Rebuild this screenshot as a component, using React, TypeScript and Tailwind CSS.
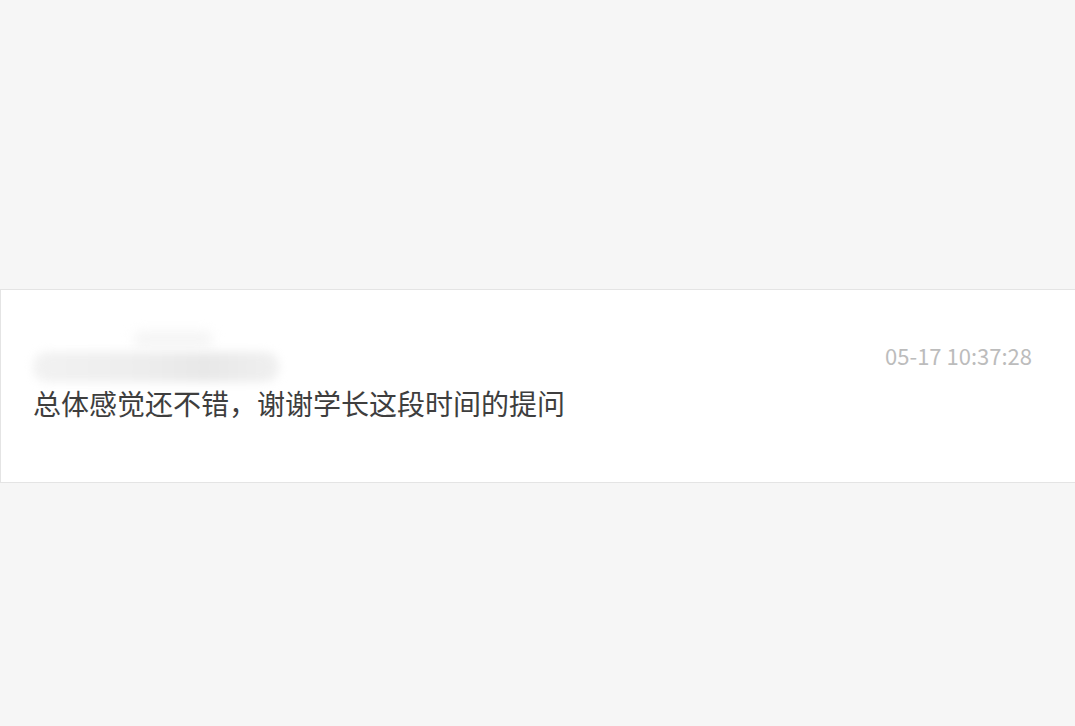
const FONT = "font-['Microsoft_YaHei','Noto_Sans_CJK_SC','Noto_Sans',sans-serif]";

function BlurredName() {
  // the name in the reference is smudged out; paint a soft grey blot in its place
  return (
    <div aria-hidden="true" className="mt-[-10px] flex w-[250px] flex-col">
      <div className="ml-[100px] h-[14px] w-[80px] rounded-full bg-[#f4f4f4] blur-[6px]" />
      <div className="mt-[6px] h-[30px] w-[246px] rounded-[14px] bg-[linear-gradient(90deg,#f2f2f2_0%,#ededed_45%,#e8e8e8_70%,#f0f0f0_100%)] blur-[5px]" />
    </div>
  );
}

function CommentCard() {
  return (
    <article className="h-[194px] border-y border-l border-[#e4e4e4] bg-white pl-[32px] pr-[43px] pt-[52px]">
      <div className="flex h-[45px] items-start justify-between">
        <BlurredName />
        <time className="text-[22px] leading-[26px] text-[#bcbcbc]">05-17 10:37:28</time>
      </div>
      <p className="mt-[-2px] text-[28px] leading-[36px] text-[#3e3e3e]">
        总体感觉还不错，谢谢学长这段时间的提问
      </p>
    </article>
  );
}

export default function App() {
  return (
    <div className={`${FONT} h-[726px] w-full overflow-hidden bg-[#f6f6f6] pt-[289px]`}>
      <CommentCard />
    </div>
  );
}
